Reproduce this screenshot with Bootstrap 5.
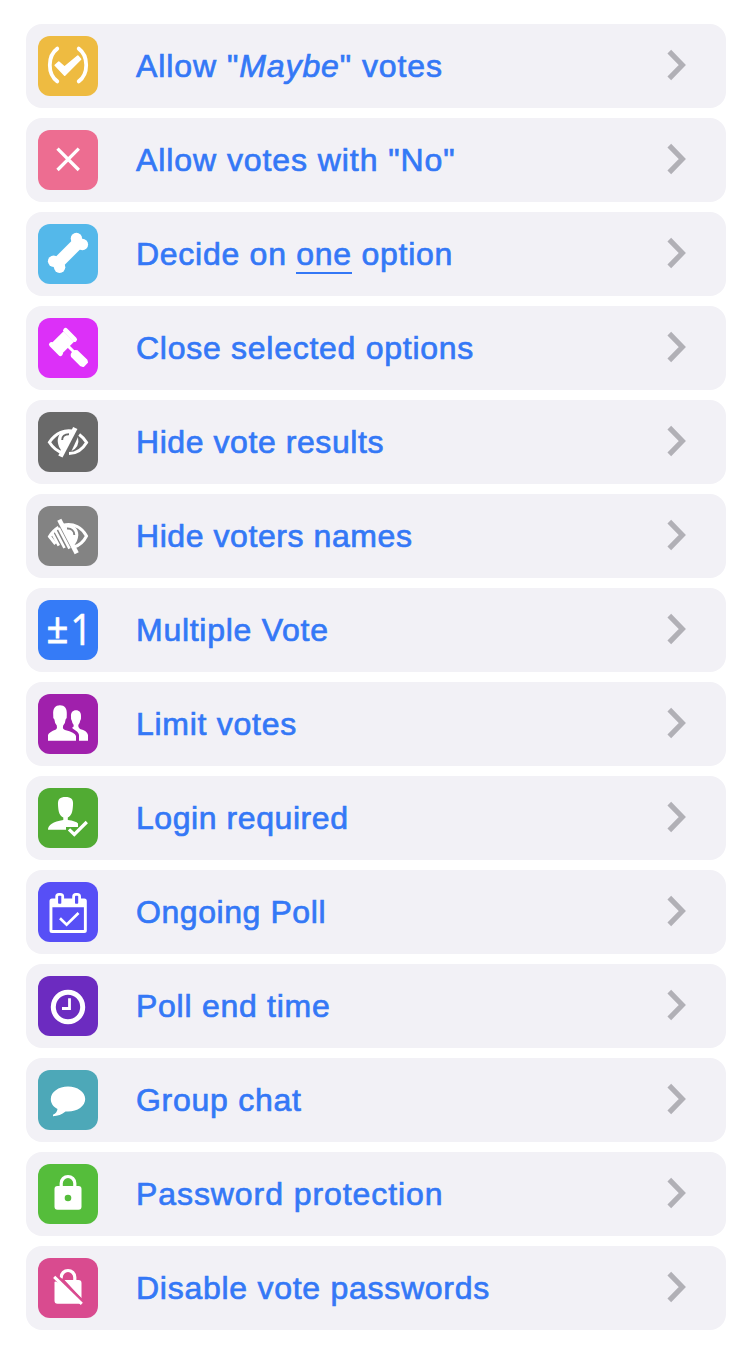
<!DOCTYPE html>
<html lang="en">
<head>
<meta charset="utf-8">
<meta name="viewport" content="width=device-width, initial-scale=1">
<title>Poll settings</title>
<link href="https://cdn.jsdelivr.net/npm/bootstrap@5.3.0/dist/css/bootstrap.min.css" rel="stylesheet">
<style>
body{background:#fff;font-family:"Liberation Sans",Arial,sans-serif}
.settings{padding:24px 18px 24px 26px;gap:10px}
.setting{height:84px;border-radius:16px;background:#f2f1f6;padding:0 38px 0 12px;color:#3478f6;font-size:32px;line-height:40px;-webkit-text-stroke:.7px #3478f6;letter-spacing:.73px}
.setting:hover{color:#3478f6}
.setting:nth-child(1),.setting:nth-child(2),.setting:nth-child(13){letter-spacing:.92px}
.setting:nth-child(5),.setting:nth-child(6),.setting:nth-child(9),.setting:nth-child(10){letter-spacing:.57px}
.tile{width:60px;height:60px;border-radius:12px;margin-right:38px;fill:#fff;stroke:none;-webkit-text-stroke:0;letter-spacing:0;overflow:visible}
.ln{fill:none;stroke:#fff}
.chev{width:24px;height:32px;fill:none;stroke:#b1b0b6;stroke-width:5.2;margin-top:-2px}
.under{border-bottom:2px solid #3478f6;display:inline-block;line-height:35px}
</style>
</head>
<body>
<main class="settings d-flex flex-column">
<a class="setting d-flex align-items-center text-decoration-none" href="#"><svg class="tile" style="background:#eebb41" viewBox="0 0 60 60"><path class="ln" stroke-width="3.8" stroke-linecap="round" d="M19.3 12.6C9.3 20 9.3 38 19.3 45.4M40.7 12.6C50.7 20 50.7 38 40.7 45.4"/><path stroke="#fff" stroke-width="1.6" stroke-linejoin="round" d="M17.2 29.3 20.8 26 26.5 31.2 39.8 20 42.6 23.2 26.7 39.2Z"/></svg><span class="flex-grow-1">Allow "<em>Maybe</em>" votes</span><svg class="chev" viewBox="0 0 24 32"><path id="chevron" d="M5.3 2.6 18.3 16 5.3 29.4"/></svg></a>
<a class="setting d-flex align-items-center text-decoration-none" href="#"><svg class="tile" style="background:#ed6d91" viewBox="0 0 60 60"><path class="ln" stroke-width="3.3" d="M19.5 18.7 40.8 40M40.8 18.7 19.5 40"/></svg><span class="flex-grow-1">Allow votes with "No"</span><svg class="chev" viewBox="0 0 24 32"><use href="#chevron"/></svg></a>
<a class="setting d-flex align-items-center text-decoration-none" href="#"><svg class="tile" style="background:#54b8ea" viewBox="0 0 60 60"><path class="ln" stroke-width="12" d="M41 18 19 40"/><circle cx="38.4" cy="14.5" r="5.7"/><circle cx="44.4" cy="20.5" r="5.7"/><circle cx="15.6" cy="37.3" r="5.7"/><circle cx="21.6" cy="43.3" r="5.7"/></svg><span class="flex-grow-1">Decide on <span class="under">one</span> option</span><svg class="chev" viewBox="0 0 24 32"><use href="#chevron"/></svg></a>
<a class="setting d-flex align-items-center text-decoration-none" href="#"><svg class="tile" style="background:#dc30f8" viewBox="0 0 60 60"><path class="ln" stroke-width="5" stroke-linecap="round" d="M27.6 12.5 36.5 21.4M13.5 26.6 22.4 35.5"/><path d="M25.3 13.5 14 24.8 24.5 35.3 35.8 24Z"/><path class="ln" stroke-width="3" d="M27 25 37 35"/><path stroke="#fff" stroke-width="2.4" stroke-linejoin="round" d="M35.3 34.5Q36.5 32.5 39.2 33.5L48.3 42.4 48.8 44.2 45.2 47.8 43 47.2 34.2 38.5Q33.2 36.2 35.3 34.5Z"/></svg><span class="flex-grow-1">Close selected options</span><svg class="chev" viewBox="0 0 24 32"><use href="#chevron"/></svg></a>
<a class="setting d-flex align-items-center text-decoration-none" href="#"><svg class="tile" style="background:#696969" viewBox="0 0 60 60"><path class="ln" stroke-width="3" d="M37 19.7C27 16.7 17.5 21 11.4 30.3 15 36 19.5 39.5 25 41M41.2 22.5Q46 26 48.6 30.5C44.5 37.5 38.5 41.5 31 41.6"/><path d="M34 18.8C24.5 17 19.7 22 19.7 29Q20 36 25 40Z"/><path class="ln" style="stroke:#696969" stroke-width="1.9" d="M24.2 28C24 24.5 26.5 22.3 31 22.3"/><path d="M40 25Q42 35 33.5 39Z"/><path class="ln" stroke-width="4.8" d="M37.3 16 22.4 44.5"/></svg><span class="flex-grow-1">Hide vote results</span><svg class="chev" viewBox="0 0 24 32"><use href="#chevron"/></svg></a>
<a class="setting d-flex align-items-center text-decoration-none" href="#"><svg class="tile" style="background:#838383" viewBox="0 0 60 60"><path class="ln" stroke-width="3" d="M25 19.3C36 16.7 44 22 48.5 30 45.5 36 41 39.5 36 41M20.5 21.2Q14.5 25 11.5 30.5L17.5 38"/><path d="M26 18.6C35.5 17.5 40.3 22 40.3 29Q39.9 36 35.5 39.5Z"/><path class="ln" style="stroke:#838383" stroke-width="1.9" d="M29 22.5C33.5 22.2 36.3 25 36.3 29"/><path class="ln" stroke-width="2.7" d="M14 26.7 20.8 39.7M17 23.8 26.5 42M20.7 22 31.5 42.7"/><path class="ln" stroke-width="4.6" d="M21.3 13.8 38.7 47.2"/></svg><span class="flex-grow-1">Hide voters names</span><svg class="chev" viewBox="0 0 24 32"><use href="#chevron"/></svg></a>
<a class="setting d-flex align-items-center text-decoration-none" href="#"><svg class="tile" style="background:#357bf7" viewBox="0 0 60 60"><text transform="translate(8.6 42.8) scale(.97 1.06)" font-family="Open Sans" font-size="39.5" stroke="#fff" stroke-width=".8">±</text><text transform="translate(32.3 44.7) scale(.88 1)" font-family="Open Sans" font-size="44" stroke="#fff" stroke-width=".5">1</text></svg><span class="flex-grow-1">Multiple Vote</span><svg class="chev" viewBox="0 0 24 32"><use href="#chevron"/></svg></a>
<a class="setting d-flex align-items-center text-decoration-none" href="#"><svg class="tile" style="background:#a020ac" viewBox="0 0 60 60"><path d="M10 46.7V41Q11 38 18 35.5 19.5 34 18.8 31.5 16.7 29.5 16.4 25.5 14.8 24 15.2 20.5C14.8 14 17.5 11.2 22 11.2S29.2 14 28.8 20.5Q29.2 24 27.6 25.5 27.3 29.5 25.2 31.5C24.5 34 25 35.2 27 36Q37 38.5 38 42V46.7Z"/><path d="M34 33.8Q36 33.5 35.7 31 34.2 29.5 33.9 27 32.7 25.5 33 22.5C32.8 18.5 34.7 16.3 38 16.3S43.2 18.5 43 22.5Q43.3 25.5 42.1 27 41.8 29.5 40.3 31 39.8 33.7 42 35 49 36.5 50 41V46.7H41V41C40.5 37.5 36.5 36.5 34 33.8Z"/></svg><span class="flex-grow-1">Limit votes</span><svg class="chev" viewBox="0 0 24 32"><use href="#chevron"/></svg></a>
<a class="setting d-flex align-items-center text-decoration-none" href="#"><svg class="tile" style="background:#51ab33" viewBox="0 0 60 60"><path d="M10 41.7C10 37 15 33.5 25.3 32V29.5C21.5 28 20.3 23.5 20 17C19.5 11 22 9 27.5 9S35.5 11 35 17C34.7 23.5 33.5 28 29.8 29.5V32Q38 33 40 35.5V39H28V41.7Z"/><path class="ln" stroke-width="3.2" d="M31 41.3 36.3 46.5 48.8 34"/></svg><span class="flex-grow-1">Login required</span><svg class="chev" viewBox="0 0 24 32"><use href="#chevron"/></svg></a>
<a class="setting d-flex align-items-center text-decoration-none" href="#"><svg class="tile" style="background:#574ff6" viewBox="0 0 60 60"><path fill-rule="evenodd" d="M14 16.5H46.3Q48.8 16.5 48.8 19V48.5Q48.8 51 46.3 51H14Q11.5 51 11.5 48.5V19Q11.5 16.5 14 16.5ZM14.4 25.2V48H45.9V25.2Z"/><rect x="17.3" y="11" width="8.8" height="13" rx="3.7"/><rect x="34.2" y="11" width="8.8" height="13" rx="3.7"/><rect x="20.1" y="13.8" width="3.2" height="8" rx=".8" fill="#574ff6"/><rect x="37" y="13.8" width="3.2" height="8" rx=".8" fill="#574ff6"/><path class="ln" stroke-width="2.7" d="M22 36.3 28.6 42.7 40.5 31"/></svg><span class="flex-grow-1">Ongoing Poll</span><svg class="chev" viewBox="0 0 24 32"><use href="#chevron"/></svg></a>
<a class="setting d-flex align-items-center text-decoration-none" href="#"><svg class="tile" style="background:#6c2bc0" viewBox="0 0 60 60"><circle class="ln" stroke-width="5" cx="30" cy="31" r="14.7"/><path class="ln" stroke-width="2.8" d="M31.5 22.2V32.5H24"/></svg><span class="flex-grow-1">Poll end time</span><svg class="chev" viewBox="0 0 24 32"><use href="#chevron"/></svg></a>
<a class="setting d-flex align-items-center text-decoration-none" href="#"><svg class="tile" style="background:#4da8b8" viewBox="0 0 60 60"><path d="M30 16.5C39.5 16.5 47.2 22 47.2 29S39.5 41.5 30 41.5H27.5Q22 46 15 46.2V44.7Q19 43 19.5 39C15 36.7 12.8 33 12.8 29 12.8 22 20.5 16.5 30 16.5Z"/></svg><span class="flex-grow-1">Group chat</span><svg class="chev" viewBox="0 0 24 32"><use href="#chevron"/></svg></a>
<a class="setting d-flex align-items-center text-decoration-none" href="#"><svg class="tile" style="background:#55bd3b" viewBox="0 0 60 60"><rect x="16.5" y="22" width="27" height="23.7" rx="3"/><path class="ln" stroke-width="3.2" d="M23.2 23V19.3a6.8 6.8 0 0 1 13.6 0V23"/><circle cx="30" cy="34" r="3.3" fill="#55bd3b"/></svg><span class="flex-grow-1">Password protection</span><svg class="chev" viewBox="0 0 24 32"><use href="#chevron"/></svg></a>
<a class="setting d-flex align-items-center text-decoration-none" href="#"><svg class="tile" style="background:#d94b8f" viewBox="0 0 60 60"><path d="M16.5 19.5V42.7Q16.5 45.7 19.5 45.7H42.5ZM26.5 22H40.5Q43.5 22 43.5 25V40.5Z"/><path class="ln" stroke-width="3.2" d="M23.2 20.5V19.3A6.8 6.8 0 0 1 36.8 19.3V23"/><path class="ln" style="stroke:#d94b8f" stroke-width="2.2" d="M18 16.6 45.8 43.8"/><path fill="#d94b8f" d="M15.5 21H16.5L20 24.5 17.5 23.5 16.2 24Z"/><path class="ln" stroke-width="3" d="M16.2 18.9 43.8 45.9"/></svg><span class="flex-grow-1">Disable vote passwords</span><svg class="chev" viewBox="0 0 24 32"><use href="#chevron"/></svg></a>
</main>
<script src="https://cdn.jsdelivr.net/npm/bootstrap@5.3.0/dist/js/bootstrap.bundle.min.js"></script>
</body>
</html>
